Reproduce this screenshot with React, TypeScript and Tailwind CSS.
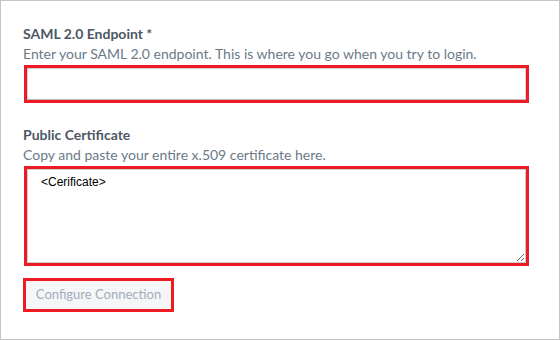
import React from "react";

export default function App() {
  return (
    <div className="w-[560px] h-[340px] bg-white border border-[#c4c4c4] font-['Lato','Noto_Sans',sans-serif] pl-[22px] pr-[30px] pt-[23px]">
      <div className="text-[14px] leading-[20px] font-bold text-[#4d5864]">SAML 2.0 Endpoint *</div>
      <div className="text-[14px] leading-[20px] text-[#6c7a88]">
        Enter your SAML 2.0 endpoint. This is where you go when you try to login.
      </div>
      <div className="mt-[1px] ml-px border-[3px] border-[#ed1c24] h-[38px]">
        <input
          type="text"
          className="w-full h-full border border-[#d0d4d9] border-b-[#b8bdc3] outline-none px-2 text-[12px]"
        />
      </div>

      <div className="mt-[22px] text-[14px] leading-[20px] font-bold text-[#4d5864]">Public Certificate</div>
      <div className="text-[14px] leading-[20px] text-[#6c7a88]">Copy and paste your entire x.509 certificate here.</div>
      <div className="mt-[1px] ml-px border-[3px] border-[#ed1c24] h-[100px] flex">
        <textarea
          defaultValue="<Cerificate>"
          className="flex-1 border border-[#c8cdd3] outline-none px-[13px] py-[4px] text-[12px] leading-[16px] text-black font-['Liberation_Sans',Arial,sans-serif] resize-y"
        />
      </div>

      <div className="mt-[12px] inline-flex border-[3px] border-[#ed1c24]">
        <button
          type="button"
          className="h-[28px] w-[145px] bg-[#f4f6f8] text-[13px] text-[#a3adb8]"
        >
          Configure Connection
        </button>
      </div>
    </div>
  );
}
